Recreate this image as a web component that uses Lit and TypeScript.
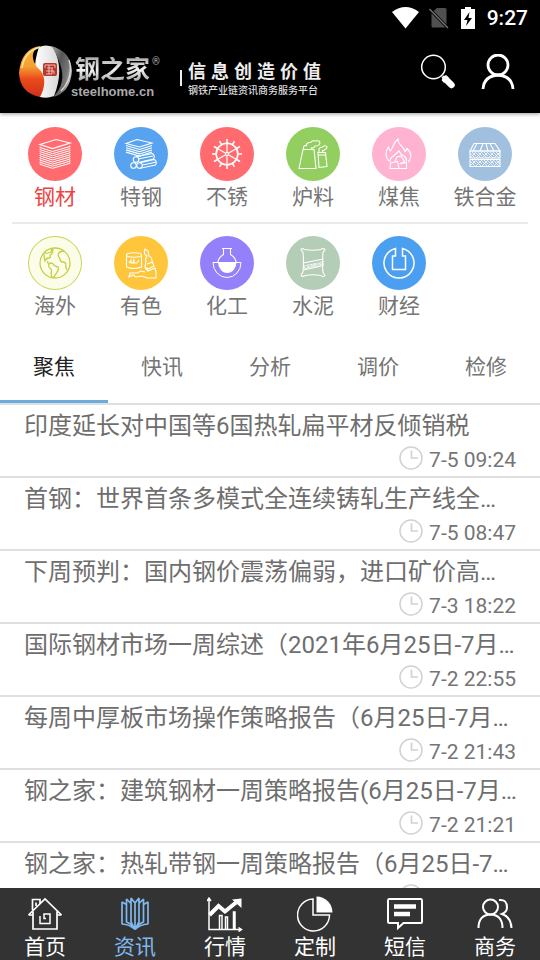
import { LitElement, html, svg, css, nothing, SVGTemplateResult } from "lit";
import { customElement, state } from "lit/decorators.js";
import { classMap } from "lit/directives/class-map.js";

interface Category { name: string; tone: string; art: SVGTemplateResult; }
interface Article { title: string; time: string; }
interface NavItem { name: string; art: SVGTemplateResult; }

const steps = (n: number) => Array.from({ length: n }, (_, i) => i);

/* Category artwork, drawn on a 54 x 54 disc */
const plates = svg`
  <path d="M12 17.5 28 12.5 42 16 24.5 21.5Z" stroke-width="1.2"/>
  ${steps(9).map((i) => svg`<path d=${`M12 ${19.5 + i * 2.1}v1l12.5 4 17.5-5v-1`} stroke-width="1"/>`)}`;

const specialSteel = svg`
  <path d="M12 16.5 23 12.5 38 16 25.5 20Z"/>
  ${steps(4).map((i) => svg`<path d=${`M12 ${18.5 + i * 2.2}l13.5 4 12.5-4`}/>`)}
  <circle cx="22" cy="32.5" r="2.8"/><circle cx="19.5" cy="38.5" r="2.8"/><circle cx="25.5" cy="38.5" r="2.8"/>
  <path d="M22 29.7 38.5 26.5q3 2.5 1 5.5L25 35.2M24 32l15-3M26 35.7 40.5 32.5q3 2.5 1 5.5L26 41.3M28.5 38l13-2.7"/>`;

const wheel = svg`
  <circle cx="27" cy="27" r="10.8" stroke-width="1.6"/>
  <circle cx="27" cy="27" r="1.5"/>
  ${steps(12).map((i) => svg`<path transform=${`rotate(${i * 30} 27 27)`} d="M27 16.5V12" stroke-width="1.5"/>`)}
  ${steps(6).map((i) => svg`<path transform=${`rotate(${i * 60} 27 27)`} d="M27 26V16.5" stroke-width="1.2"/>`)}`;

const towers = svg`
  <path d="M17 22.5H28L30 41.5H13ZM17.5 22v-2q1-2 3-1.5 0-3.5 4-3 2-2.5 4.5-1.5 5-1 5 2-.5 3-5 3-1 2.5-3.5 2v1.5"/>
  <path d="M32 25.5H39.5L41 39.5 33 40.5ZM32 28H39.5M33 25v-3q1-2 3.5-2 3-2.5 4.5 0 0 2-2 2.5-1 1.5-2.5 1V25"/>`;

const fire = svg`
  <path d="M17 34q-4-4-2.5-10 .5-2 2-4 .5 3 2 4 2-3 3-6 1-3 4.500-6 .5 5 3.5 7 3 3 3.500 5.500 1.500-1 2-3 5 5 3.500 9-.5 3.500-2.500 4.500M18 35q0-4 3-5.500l6-5.500q2 4 5 5 3 3 2.500 5.500"/>
  <path d="M18.500 36l7-1.500 1.500 7H18ZM27.500 37l7-1.500v6H27M23 34l2-4 4-1 3.500 5.500-5 2.500"/>`;

const crates = svg`
  <path d="M16 16.5H37L42 24H12ZM19 16.5 15 24M25 16.5 22 24M28 16.5 30 24M32 16.5 36 24"/>
  <path d="M12 24H42V31H12ZM12 32.5H42V39.5H12Z"/>
  ${steps(5).map((i) => svg`<path stroke-width=".8" d=${`M${12 + i * 6} 31l6-6M${12 + i * 6} 26l5 5M${14 + i * 6} 25l4 4M${12 + i * 6} 39l6-6M${12 + i * 6} 34l5 5M${14 + i * 6} 33l4 4`}/>`)}`;

const globe = svg`
  <circle cx="27" cy="27" r="15" stroke-width="1.3"/>
  <path d="M17 16q1 2 3 1l3-1 1-3M16 17q0 6 1 8 1-3 4-3 2 0 1-3 3-1 3-6M20 25q-1 2 1 3-1 4 2 5 1 2 0 4l1 5M21 28q2-2 4 0 1 2 5 3 1 3-1 5-2 4-4 6M36 15q-5 0-6 4 1 2 2 4 0 3 3 3 2 0 3 2-1 3 1 6" stroke-width="1.3"/>`;

const metals = svg`
  <ellipse cx="20" cy="19" rx="7.5" ry="2.2"/>
  <path d="M12.500 19V31q7 3 15 0V19M15 27l2-3v3h2l1-4v4h3l2-3"/>
  <path d="M32 25q-1-3 1-5-4-2-2-7l3 2 1 5q3 1 3 5l2 5-6 3-3-2ZM33 28l6-2M31 32l3 3 7-3 1 4v6H33l-5-2-6 1-3-2-4 2 1-4h7l4-2 4 1"/>`;

const flask = svg`
  <path d="M22 12.5H32M23.5 12.5v6q-5 3-5.500 7.500M30.5 12.5v6q5 3 5.500 7.500"/>
  <path d="M13 26.5H41A14 15 0 0 1 13 26.5Z" stroke-width="1"/>
  <path class="solid" d="M18 26H36.500A9.250 11 0 0 1 18 26Z"/>`;

const cementBag = svg`
  <path d="M15 13.5q2-2 3 0 10 1.5 17 0 2-2 4 0l-2 3q-1 10 0 20l2 3q-2 2.5-4 0-8-1.500-16 0-3 2-4-.5l2-3q1-10 0-19.500Z"/>
  <path d="M17.5 27 37.5 23M17.5 34 37.5 29.5"/>
  <text class="bag" x="18" y="33" transform="rotate(-12 18 33)">CEMENT</text>`;

const coin = svg`
  <path d="M23.5 12.4A15 15 0 1 0 30.5 12.4V20H33.5V33.5H20.5V20H23.5Z" stroke-width="1.5"/>`;

const CATEGORIES: Category[] = [
  { name: "钢材", tone: "red", art: plates },
  { name: "特钢", tone: "blue", art: specialSteel },
  { name: "不锈", tone: "red", art: wheel },
  { name: "炉料", tone: "green", art: towers },
  { name: "煤焦", tone: "pink", art: fire },
  { name: "铁合金", tone: "steel", art: crates },
  { name: "海外", tone: "lime", art: globe },
  { name: "有色", tone: "amber", art: metals },
  { name: "化工", tone: "violet", art: flask },
  { name: "水泥", tone: "sage", art: cementBag },
  { name: "财经", tone: "azure", art: coin },
];

const TABS = ["聚焦", "快讯", "分析", "调价", "检修"];

const ARTICLES: Article[] = [
  { title: "印度延长对中国等6国热轧扁平材反倾销税", time: "7-5 09:24" },
  { title: "首钢：世界首条多模式全连续铸轧生产线全…", time: "7-5 08:47" },
  { title: "下周预判：国内钢价震荡偏弱，进口矿价高…", time: "7-3 18:22" },
  { title: "国际钢材市场一周综述（2021年6月25日-7月…", time: "7-2 22:55" },
  { title: "每周中厚板市场操作策略报告（6月25日-7月…", time: "7-2 21:43" },
  { title: "钢之家：建筑钢材一周策略报告(6月25日-7月…", time: "7-2 21:21" },
  { title: "钢之家：热轧带钢一周策略报告（6月25日-7…", time: "" },
];

/* Bottom bar artwork, 36 x 36 */
const NAV: NavItem[] = [
  { name: "首页", art: svg`<path d="M1.5 19 18 3 34.5 19M6 15.5V33H30V15.5M6 19H1.5M30 19H34.5M5.5 14V3.5H13V7.5M9 10V6.5" stroke-width="1.7"/><path d="M13 20V27.5H23V18H17V22.500H19" stroke-width="1.5"/>` },
  { name: "资讯", art: svg`<path d="M18 33.500Q13 28.500 5 28V6L9.500 8.500V26Q15 28 18 33.500M9.500 8.500V3L14 7.500V26L18 33.500M14 7.500V2L18 7V33.500Q23 28.500 31 28V6L26.500 8.500V26Q21 28 18 33.500M26.500 8.500V3L22 7.500V26L18 33.500M22 7.500V2L18 7" stroke-width="1.7" stroke-linejoin="bevel"/>` },
  { name: "行情", art: svg`<path d="M2 2V33.5H34M0 5 2 2 4 5M31.5 31.5 34.5 33.5 31.5 35.5" stroke-width="1.5"/><path d="M12.5 33V19.5H15V33M18.5 33V21H20.5V33M26.5 33V16H28V33" stroke-width="1.5"/><path d="M2.5 19 11.5 10 18 15.5 29 6.5" stroke-width="4"/><path class="solid" d="M25 3.5 34.5 2.5V12Z"/>` },
  { name: "定制", art: svg`<path d="M16 3A16 16 0 1 0 32.5 19H16Z" stroke-width="1.5"/><path class="solid" d="M19.5.5A16 16 0 0 1 35.5 16.5H19.5Z"/>` },
  { name: "短信", art: svg`<path d="M2 3H34Q35 3 35 4.5V25.5Q35 27 34 27H16.5L11 32V27H2.5Q1 27 1 25.500V4.5Q1 3 2 3Z" stroke-width="2"/><path d="M7 10.5H29M7 18H23" stroke-width="4.500"/>` },
  { name: "商务", art: svg`<circle cx="13.5" cy="11" r="7.500" stroke-width="2"/><path d="M1.5 32Q1.5 19 13.5 18.5 25.5 19 25.5 32M22 4Q30 3 30 11.5 30 16 25 18 34 21 34.5 32" stroke-width="2"/>` },
];

@customElement("app-root")
export class AppRoot extends LitElement {
  @state() private category = 0;
  @state() private tab = 0;
  @state() private section = 1;

  static styles = css`
    :host {
      display: flex;
      flex-direction: column;
      height: 100vh;
      overflow: hidden;
      background: #fff;
      color: #757575;
      font-family: Roboto, "Noto Sans CJK SC", sans-serif;
      font-size: 21px;
      line-height: 24px;
    }
    * { box-sizing: border-box; }
    svg { display: block; fill: none; stroke: currentColor; flex: none; }
    .solid { fill: currentColor; stroke: none; }
    button {
      border: 0; padding: 0; background: none; color: inherit;
      font: inherit; cursor: pointer;
    }
    a { color: inherit; text-decoration: none; }

    .status {
      display: flex; justify-content: flex-end; align-items: center;
      height: 36px; padding: 0 12px;
      background: #000; color: #fff; font-weight: 500;
    }
    .status svg { margin-right: 10px; }

    .header {
      display: flex; align-items: center;
      height: 77px; padding: 0 24px 6px 18px;
      background: #000; color: #fff;
      box-shadow: 0 1px 4px rgba(0, 0, 0, 0.4);
      position: relative;
    }
    .brand { display: flex; flex-direction: column; width: 88px; padding-top: 12px; gap: 2px; }
    .wordmark {
      display: flex; align-items: flex-start; gap: 2px; margin-left: 2px;
      font-size: 25px; line-height: 26px; font-weight: 700;
    }
    .metal {
      background: linear-gradient(#a8a8a8, #f2f2f2 50%, #999);
      -webkit-background-clip: text; background-clip: text;
      color: transparent;
    }
    .reg { font-size: 10px; line-height: 10px; font-weight: 400; color: #aaa; }
    .domain {
      margin-left: -2px;
      font: 700 13px/14px "Liberation Sans", sans-serif;
      color: #aaa;
    }
    .rule { width: 2px; height: 16px; margin: 12px 6px 0 19px; background: #eee; }
    .slogan { display: flex; flex-direction: column; gap: 2px; padding-top: 16px; }
    .motto { display: flex; gap: 5px; font-size: 18px; line-height: 20px; font-weight: 700; color: #eee; }
    .tagline { font-size: 10px; line-height: 14px; font-weight: 500; color: #ddd; white-space: nowrap; }
    .actions { display: flex; gap: 24px; margin-left: auto; }

    .categories {
      display: grid; grid-template-columns: repeat(6, 1fr);
      padding: 2px 12px 0;
    }
    .category {
      display: flex; flex-direction: column; align-items: center; gap: 4px;
      padding: 12px 0; height: 109px;
    }
    .split { grid-column: 1 / -1; height: 2px; background: #ebebeb; margin: -2px 0 0; }
    .category.active { color: #ef4343; }
    .disc { border-radius: 50%; width: 54px; height: 54px; color: #fff; stroke-width: 1.1; }
    .red { background: #ff6b6e; }
    .blue { background: #57a3ef; }
    .green { background: #93cf60; }
    .pink { background: #ffb3d0; }
    .steel { background: #a1bfde; }
    .lime { background: #fcfde8; color: #c4cf45; box-shadow: inset 0 0 0 1px #cbd45a; }
    .amber { background: #ffc63c; }
    .violet { background: #9480fb; }
    .sage { background: #b4cdb6; }
    .azure { background: #4b9ff0; }
    .bag { fill: currentColor; stroke: none; font: 700 5px "Liberation Sans", sans-serif; }

    .tabs { display: flex; border-bottom: 2px solid #dfdfdf; height: 72px; flex: none; }
    .tab { flex: 1; border-bottom: 3px solid transparent; }
    .tab.active { color: #222; border-color: #6cacdc; }

    .list {
      flex: 1; min-height: 0; margin: 0; padding: 0; list-style: none;
      overflow-y: auto; scrollbar-width: none;
    }
    .article {
      display: flex; flex-direction: column;
      padding: 5px 24px 0; height: 73px;
      border-bottom: 2px solid #dfdfdf;
    }
    .title {
      font-size: 24px; line-height: 32px; color: #6e6e6e;
      white-space: nowrap; overflow: hidden;
    }
    .meta { display: flex; justify-content: flex-end; gap: 5px; padding-top: 4px; }
    .meta svg { color: #d2d2d2; }
    .meta time { min-width: 88px; line-height: 28px; text-align: right; }

    .nav { display: flex; height: 72px; flex: none; background: #333; color: #fff; }
    .nav a {
      flex: 1; display: flex; flex-direction: column; align-items: center;
      gap: 3px; padding-top: 8px;
    }
    .nav a.active { color: #80b8ee; }
  `;

  private renderCategory(c: Category, i: number) {
    return html`
      ${i === 6 ? html`<div class="split"></div>` : nothing}
      <button class=${classMap({ category: true, active: i === this.category })}
        @click=${() => (this.category = i)}>
        <svg class="disc ${c.tone}" viewBox="0 0 54 54" aria-hidden="true">${c.art}</svg>
        <span>${c.name}</span>
      </button>`;
  }

  render() {
    return html`
      <div class="status">
        <svg width="27" height="22" viewBox="0 0 27 22"><path class="solid" d="M0 5Q13.5-5 27 5L13.5 21.5Z"/></svg>
        <svg width="20" height="22" viewBox="0 0 20 22">
          <path d="M8 1H16Q17.5 1 17.5 2.5V19Q17.5 20.5 16 20.5H4Q2.5 20.5 2.5 19V6Z" fill="#505050" stroke="none"/>
          <path d="M.5 2 19 21" stroke="#000" stroke-width="3"/><path d="M.5 2 19 21" stroke="#777" stroke-width="1.3"/>
        </svg>
        <svg width="18" height="22" viewBox="0 0 18 22">
          <path class="solid" d="M2 2H6V0H12V2H16V22H2Z"/><path d="M10.5 5 5 13H8.5L7 19 13 11H9.5Z" fill="#000" stroke="none"/>
        </svg>
        <span>9:27</span>
      </div>

      <header class="header">
        <svg width="55" height="54" viewBox="0 0 55 54" aria-hidden="true">
          <defs>
            <linearGradient id="flame" x1=".4" y1="0" x2=".4" y2="1">
              <stop offset="0" stop-color="#f6b43c"/><stop offset=".4" stop-color="#f7a033"/>
              <stop offset=".65" stop-color="#e84a1c"/><stop offset="1" stop-color="#d3301a"/>
            </linearGradient>
            <linearGradient id="iron" x1="0" y1="0" x2="1" y2=".6">
              <stop offset="0" stop-color="#aaa"/><stop offset=".45" stop-color="#555"/>
              <stop offset=".8" stop-color="#777"/><stop offset="1" stop-color="#ccc"/>
            </linearGradient>
            <linearGradient id="pearl" x1="0" y1="0" x2="1" y2="0">
              <stop offset="0" stop-color="#fff"/><stop offset="1" stop-color="#d8d8d8"/>
            </linearGradient>
          </defs>
          <path d="M21 2Q28-1 35 2Q47 24 36 51Q29 54 22 52Q12 28 21 2Z" fill="url(#pearl)" stroke="none"/>
          <path d="M22 1Q12 6 16 17 18 22 23 26 30 37 22 52 2 48 1 28 3 4 22 1Z" fill="url(#flame)" stroke="none"/>
          <path d="M22 2Q6 7 4 23" stroke="#ffe49a" stroke-width="1.5"/>
          <path d="M33 1Q53 6 54 26 52 48 35 52 49 38 42 19 39 9 33 1Z" fill="url(#iron)" stroke="none"/>
          <path d="M51 15Q56 32 43 46" stroke="#ddd" stroke-width="1.2"/>
          <rect x="25" y="18" width="14" height="13" rx="2" fill="#b9362c" stroke="none"/>
          <path d="M27 23V20H37V23M29 23H35M28 26H36M31 20V29M34 23V29H28M36 26V29" stroke="#f6d6cf" stroke-width=".8"/>
        </svg>
        <div class="brand">
          <div class="wordmark"><span class="metal">钢之家</span><span class="reg">®</span></div>
          <span class="domain">steelhome.cn</span>
        </div>
        <span class="rule"></span>
        <div class="slogan">
          <div class="motto">${[..."信息创造价值"].map((ch) => html`<span>${ch}</span>`)}</div>
          <div class="tagline">钢铁产业链资讯商务服务平台</div>
        </div>
        <div class="actions">
          <button aria-label="搜索">
            <svg width="36" height="36" viewBox="0 0 36 36">
              <circle cx="13.5" cy="13" r="11.8" stroke-width="1.5"/>
              <path d="M22.5 22.5 24 24" stroke-width="3"/>
              <path d="M25.5 25 31.5 31" stroke-width="6.5" stroke-linecap="round"/>
              <path class="solid" d="M21.5 26 26 21 29 24 24 29Z"/>
            </svg>
          </button>
          <button aria-label="我的">
            <svg width="36" height="36" viewBox="0 0 36 36">
              <circle cx="18" cy="11" r="10" stroke-width="2.8"/>
              <path d="M3 35Q4 22 18 21 32 22 33 35" stroke-width="2.8"/>
            </svg>
          </button>
        </div>
      </header>

      <section class="categories">${CATEGORIES.map((c, i) => this.renderCategory(c, i))}</section>

      <div class="tabs" role="tablist">
        ${TABS.map((t, i) => html`
          <button role="tab" aria-selected=${i === this.tab}
            class=${classMap({ tab: true, active: i === this.tab })}
            @click=${() => (this.tab = i)}>${t}</button>`)}
      </div>

      <ul class="list">
        ${ARTICLES.map((a) => html`
          <li><a class="article" href="#">
            <span class="title">${a.title}</span>
            <span class="meta">
              <svg width="24" height="24" viewBox="0 0 24 24" aria-hidden="true">
                <circle cx="12" cy="12" r="11" stroke-width="1.5"/><path d="M12.5 4.5V12H19" stroke-width="1.7"/>
              </svg>
              <time>${a.time}</time>
            </span>
          </a></li>`)}
      </ul>

      <nav class="nav">
        ${NAV.map((n, i) => html`
          <a href="#" class=${classMap({ active: i === this.section })}
            @click=${(e: Event) => { e.preventDefault(); this.section = i; }}>
            <svg width="36" height="36" viewBox="0 0 36 36" aria-hidden="true">${n.art}</svg>
            <span>${n.name}</span>
          </a>`)}
      </nav>
    `;
  }
}
